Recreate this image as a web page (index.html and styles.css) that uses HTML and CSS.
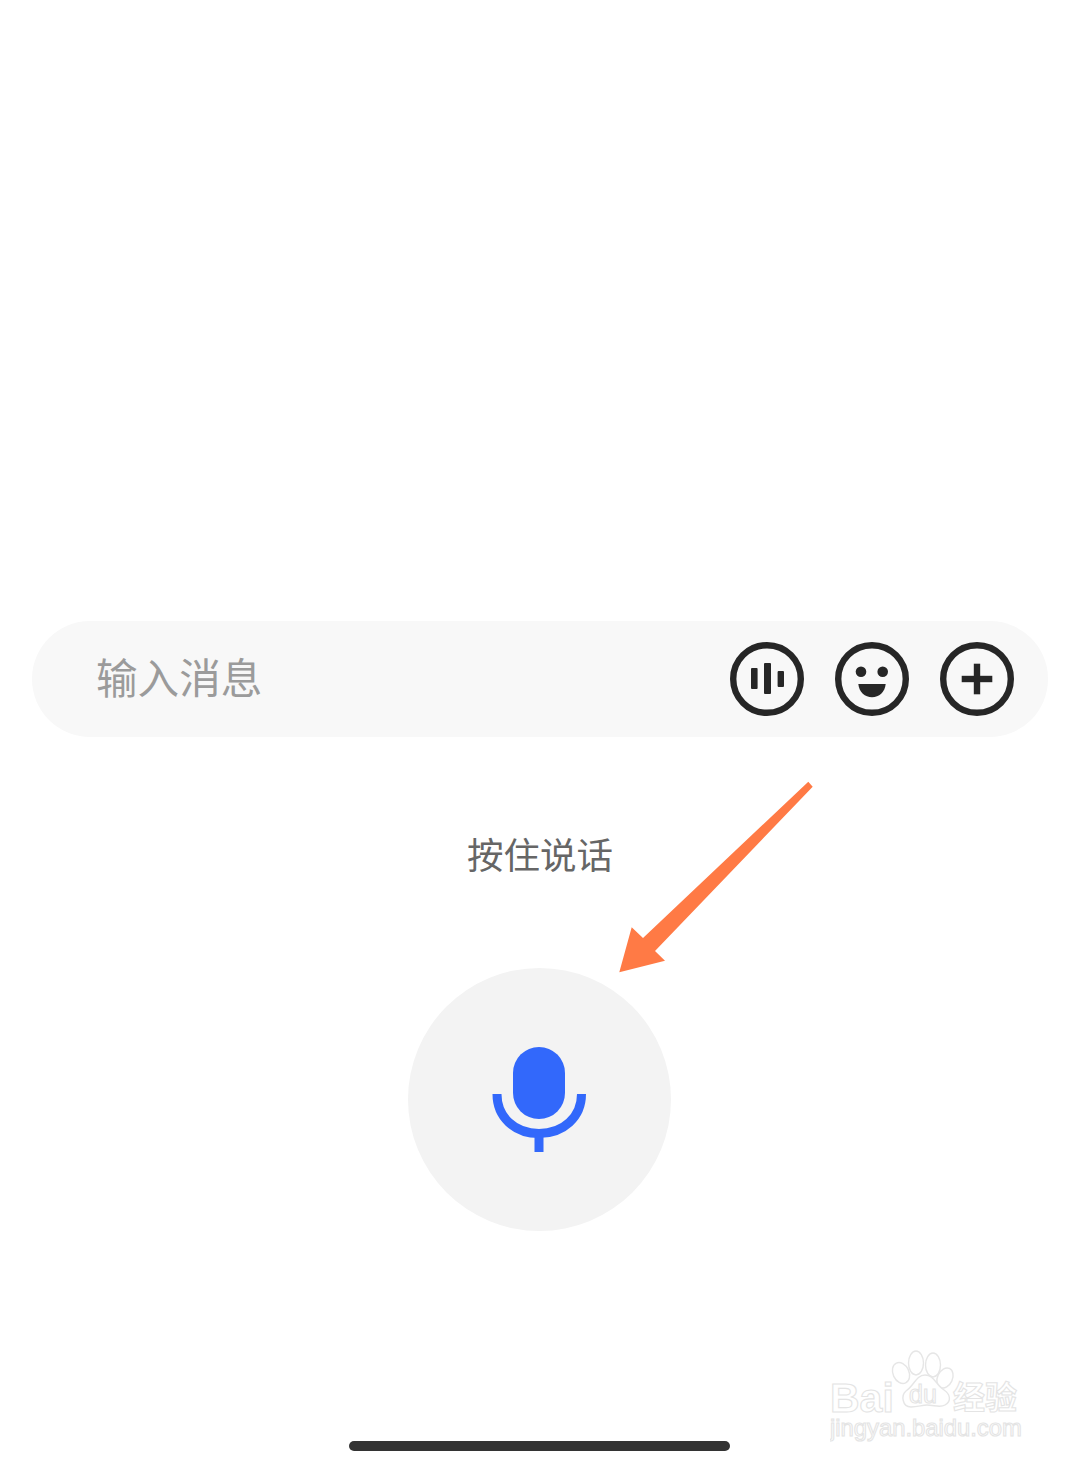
FILE: index.html
```html
<!DOCTYPE html>
<html lang="zh-CN">
<head>
<meta charset="utf-8">
<title>输入消息</title>
<link rel="stylesheet" href="styles.css">
</head>
<body>
<main class="screen">
  <section class="composer">
    <span class="placeholder">输入消息</span>
    <div class="tools">
      <svg class="tool" viewBox="0 0 74 74" aria-label="语音">
        <circle class="ring" cx="37" cy="37" r="33.8"/>
        <rect class="ink" x="21" y="26" width="6.6" height="21" rx="1"/>
        <rect class="ink" x="34" y="21" width="7" height="31" rx="1"/>
        <rect class="ink" x="47.6" y="29" width="6.4" height="16" rx="1"/>
      </svg>
      <svg class="tool" viewBox="0 0 74 74" aria-label="表情">
        <circle class="ring" cx="37" cy="37" r="33.8"/>
        <circle class="ink" cx="26" cy="29.7" r="5.3"/>
        <circle class="ink" cx="47.7" cy="29.7" r="5.3"/>
        <path class="ink" d="M23.3 42H50.7C50 50 44 55.3 37 55.3S24 50 23.3 42Z"/>
      </svg>
      <svg class="tool" viewBox="0 0 74 74" aria-label="更多">
        <circle class="ring" cx="37" cy="37" r="33.8"/>
        <rect class="ink" x="21.7" y="33.8" width="30.6" height="6.4"/>
        <rect class="ink" x="33.8" y="21.7" width="6.4" height="30.6"/>
      </svg>
    </div>
  </section>

  <p class="hint">按住说话</p>

  <button class="talk" type="button" aria-label="按住说话">
    <svg class="mic" viewBox="0 0 94 106">
      <rect class="mic-fill" x="21" y="0" width="52" height="72" rx="26"/>
      <path class="mic-arc" d="M5 47C5 70 22.500 86.500 47 86.500S89.500 70 89.500 47"/>
      <rect class="mic-fill" x="42.500" y="87" width="9" height="18"/>
    </svg>
  </button>

  <div class="home-bar"></div>

  <!-- callout pointing at the talk button -->
  <svg class="callout" viewBox="0 0 210 205">
    <path class="callout-fill" d="M198.3 6.700L202.700 11.700L45 176L55 185.700L9.300 197.300L21.700 152.300L33 163Z"/>
  </svg>

  <!-- site mark in the corner -->
  <svg class="mark" viewBox="0 0 200 105">
    <g class="mark-line">
      <ellipse cx="71" cy="28" rx="8" ry="11" transform="rotate(-25 71 28)"/>
      <ellipse cx="86" cy="18" rx="7.500" ry="12"/>
      <ellipse cx="103" cy="20" rx="7.500" ry="12"/>
      <ellipse cx="115" cy="33" rx="7.500" ry="10.500" transform="rotate(25 115 33)"/>
      <path d="M95 30C86 30 84 41 76 46C71 50 72 62 81 62C88 62 92 60 97 60C104 60 110 63 115 60C122 56 120 49 114 45C106 40 104 30 95 30Z"/>
    </g>
    <text class="mark-word" x="0" y="67">Bai</text>
    <text class="mark-du" x="79" y="58">du</text>
    <text class="mark-cn" x="123" y="64">经验</text>
    <text class="mark-url" x="0" y="91">jingyan.baidu.com</text>
  </svg>
</main>
</body>
</html>
```
FILE: styles.css
```css
html, body {
  margin: 0;
  background: #fff;
}

.screen {
  position: relative;
  width: 1080px;
  height: 1467px;
  overflow: hidden;
  display: flex;
  flex-direction: column;
  align-items: center;
  padding-top: 621px;
  box-sizing: border-box;
  font-family: "Noto Sans CJK SC", "Noto Sans", sans-serif;
}

.composer {
  width: 1016px;
  height: 116px;
  box-sizing: border-box;
  padding: 0 34px 0 64px;
  border-radius: 58px;
  background: #f8f8f8;
  display: flex;
  align-items: center;
  justify-content: space-between;
}

.placeholder {
  font-size: 41.6px;
  color: #9b9b9b;
  line-height: 1;
  padding-bottom: 5px;
}

.tools {
  display: flex;
  gap: 31px;
}

.tool {
  width: 74px;
  height: 74px;
  display: block;
}

.ring {
  fill: none;
  stroke: #262626;
  stroke-width: 6.4;
}

.ink {
  fill: #262626;
}

.hint {
  margin: 91px 0 0;
  font-size: 36.5px;
  line-height: 52px;
  color: #666;
}

.talk {
  margin: 88px 2px 0 0;
  width: 263px;
  height: 263px;
  border: 0;
  border-radius: 50%;
  background: #f3f3f3;
  display: flex;
  justify-content: center;
  padding: 79px 0 0;
  box-sizing: border-box;
}

.mic {
  width: 94px;
  height: 106px;
  display: block;
}

.mic-fill {
  fill: #3268fb;
}

.mic-arc {
  fill: none;
  stroke: #3268fb;
  stroke-width: 9;
}

.home-bar {
  margin: 210px 2px 0 0;
  width: 381px;
  height: 10px;
  border-radius: 5px;
  background: #333;
}

.callout {
  position: absolute;
  left: 610px;
  top: 775px;
  width: 210px;
  height: 205px;
}

.callout-fill {
  fill: #ff7a45;
}

.mark {
  position: absolute;
  left: 830px;
  top: 1345px;
  width: 200px;
  height: 105px;
}

.mark-line {
  fill: #fff;
  stroke: #e6e6e6;
  stroke-width: 1.4;
}

.mark-word,
.mark-du,
.mark-cn,
.mark-url {
  fill: #fff;
  stroke: #e4e4e4;
  stroke-width: 1.1;
  font-family: "Liberation Sans", sans-serif;
}

.mark-word {
  font-size: 41px;
  font-weight: 700;
}

.mark-du {
  font-size: 25px;
}

.mark-cn {
  font-family: "Noto Sans CJK SC", sans-serif;
  font-size: 32px;
  font-weight: 700;
}

.mark-url {
  font-size: 23.8px;
}
```
